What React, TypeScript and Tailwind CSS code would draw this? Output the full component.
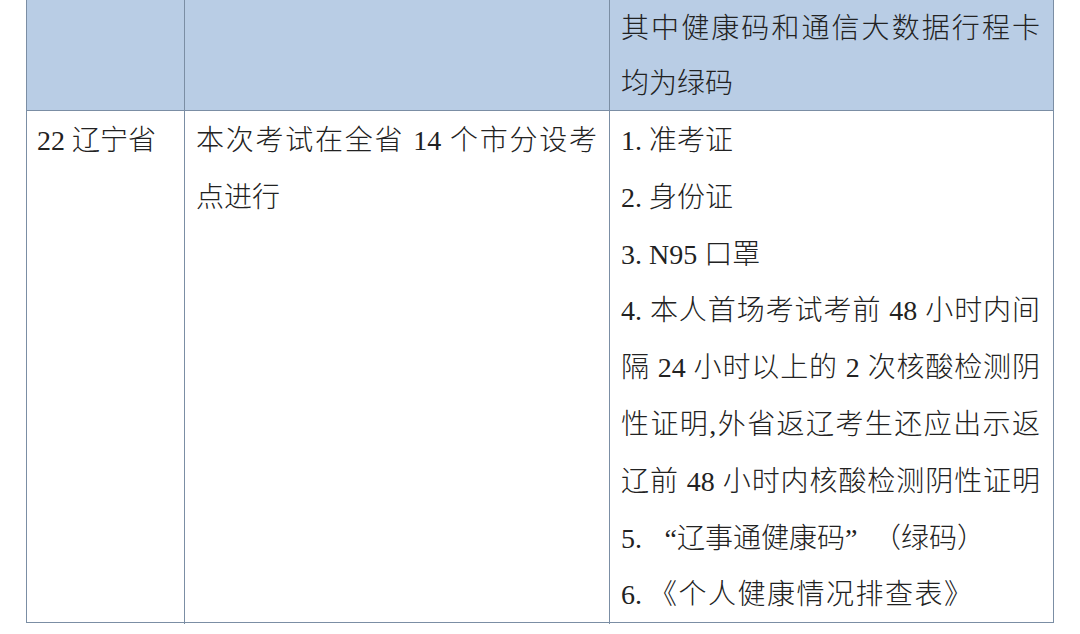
import React from "react";

type Line = { text: React.ReactNode; full?: boolean };

const header: Line[] = [
  { text: "其中健康码和通信大数据行程卡", full: true },
  { text: "均为绿码" },
];

const col1: Line[] = [{ text: "22 辽宁省" }];

const col2: Line[] = [
  { text: "本次考试在全省 14 个市分设考", full: true },
  { text: "点进行" },
];

const col3: Line[] = [
  { text: "1. 准考证" },
  { text: "2. 身份证" },
  { text: "3. N95 口罩" },
  { text: "4. 本人首场考试考前 48 小时内间", full: true },
  { text: "隔 24 小时以上的 2 次核酸检测阴", full: true },
  { text: "性证明,外省返辽考生还应出示返", full: true },
  { text: "辽前 48 小时内核酸检测阴性证明", full: true },
  {
    text: (
      <>
        5.{" "}
        <span className="inline-block w-[28px] text-right">“</span>
        辽事通健康码
        <span className="inline-block w-[28px] text-left">”</span>
        （绿码）
      </>
    ),
  },
  {
    text: (
      <>
        6. <span className="tracking-[1.5px]">《个人健康情况排查表》</span>
      </>
    ),
  },
];

function Lines({ lines, leading }: { lines: Line[]; leading: string }) {
  return (
    <>
      {lines.map((l, i) => (
        <div
          key={i}
          className={
            leading +
            " whitespace-nowrap " +
            (l.full ? "text-justify [text-align-last:justify]" : "text-left")
          }
        >
          {l.text}
        </div>
      ))}
    </>
  );
}

export default function App() {
  return (
    <div className="w-[1080px] h-[634px] bg-white overflow-hidden font-['Liberation_Serif','Noto_Sans_CJK_SC',serif] font-light text-[28px] text-[#222]">
      <div className="ml-[26px] w-[1027.5px] border-x-[1.5px] border-b-[1.5px] border-[#7b8ea4]">
        {/* header row */}
        <div className="grid grid-cols-[158px_425px_441px] h-[111px] bg-[#b9cde5] border-b-[1.5px] border-[#7b8ea4]">
          <div className="border-r-[1.5px] border-[#7b8ea4]" />
          <div className="border-r-[1.5px] border-[#7b8ea4]" />
          <div className="pl-[11px] pr-[11px] pt-[1px]">
            <Lines lines={header} leading="leading-[55px]" />
          </div>
        </div>

        {/* body row */}
        <div className="grid grid-cols-[158px_425px_441px] h-[511px]">
          <div className="border-r-[1.5px] border-[#7b8ea4] pl-[10px] pt-[2px]">
            <Lines lines={col1} leading="leading-[56.8px]" />
          </div>
          <div className="border-r-[1.5px] border-[#7b8ea4] pl-[11px] pr-[12px] pt-[2px]">
            <Lines lines={col2} leading="leading-[56.8px]" />
          </div>
          <div className="pl-[11px] pr-[11px] pt-[2px]">
            <Lines lines={col3} leading="leading-[56.8px]" />
          </div>
        </div>
      </div>
    </div>
  );
}
